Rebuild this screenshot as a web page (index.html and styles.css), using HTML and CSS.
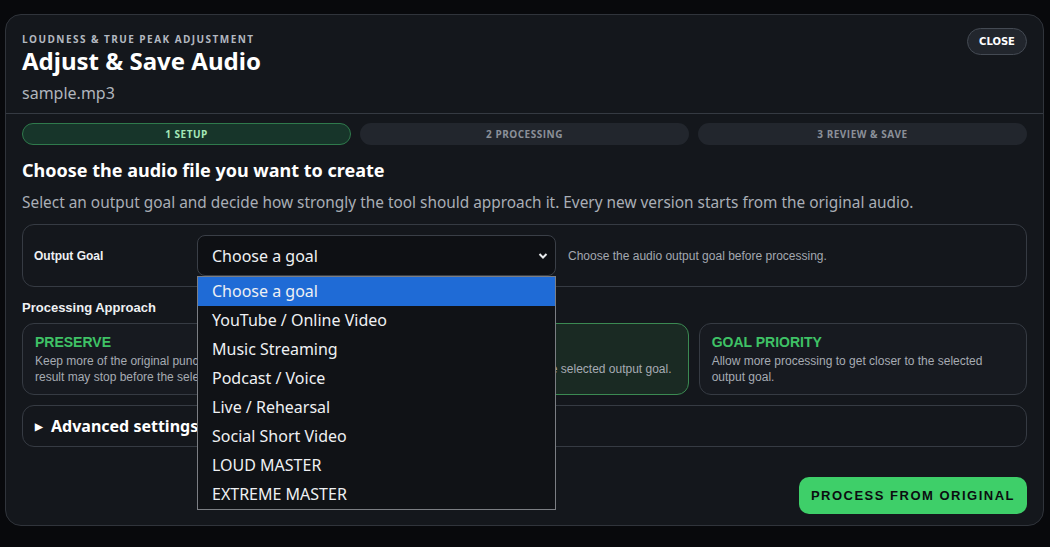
FILE: index.html
```html
<!DOCTYPE html>
<html lang="en">
<head>
    <meta charset="UTF-8">
    <meta name="viewport" content="width=device-width, initial-scale=1.0">
    <title>Adjust &amp; Save Audio</title>
    <link rel="stylesheet" href="styles.css">
</head>
<body>
    <div class="dialog">
        <div class="dialog-head">
            <div>
                <div class="eyebrow">LOUDNESS &amp; TRUE PEAK ADJUSTMENT</div>
                <h1>Adjust &amp; Save Audio</h1>
                <div class="file-name">sample.mp3</div>
            </div>
            <button class="btn-close">CLOSE</button>
        </div>

        <div class="dialog-body">
            <div class="steps">
                <div class="step active">1 SETUP</div>
                <div class="step">2 PROCESSING</div>
                <div class="step">3 REVIEW &amp; SAVE</div>
            </div>

            <h2>Choose the audio file you want to create</h2>
            <p class="lead">Select an output goal and decide how strongly the tool should approach it. Every new version starts from the original audio.</p>

            <div class="goal-row">
                <div class="goal-label">Output Goal</div>
                <div class="select-wrap">
                    <div class="select">
                        <span>Choose a goal</span>
                        <svg width="10" height="8" viewBox="0 0 10 8"><path d="M1.5 2 L5 5.5 L8.5 2" fill="none" stroke="#e8eaed" stroke-width="2"/></svg>
                    </div>
                    <ul class="options">
                        <li class="selected">Choose a goal</li>
                        <li>YouTube / Online Video</li>
                        <li>Music Streaming</li>
                        <li>Podcast / Voice</li>
                        <li>Live / Rehearsal</li>
                        <li>Social Short Video</li>
                        <li>LOUD MASTER</li>
                        <li>EXTREME MASTER</li>
                    </ul>
                </div>
                <div class="goal-hint">Choose the audio output goal before processing.</div>
            </div>

            <div class="section-label">Processing Approach</div>
            <div class="approaches">
                <div class="approach">
                    <div class="approach-title">PRESERVE</div>
                    <div class="approach-text">Keep more of the original punch and dynamics. The result may stop before the selected output goal.</div>
                </div>
                <div class="approach active">
                    <div class="approach-title">BALANCED</div>
                    <div class="approach-text">Balance punch and levels near the selected output goal.</div>
                </div>
                <div class="approach">
                    <div class="approach-title">GOAL PRIORITY</div>
                    <div class="approach-text">Allow more processing to get closer to the selected output goal.</div>
                </div>
            </div>

            <div class="advanced">
                <span class="arrow">&#9654;</span> Advanced settings
            </div>

            <div class="actions">
                <button class="btn-process">PROCESS FROM ORIGINAL</button>
            </div>
        </div>
    </div>
</body>
</html>
```

FILE: styles.css
```css
body {
    margin: 0;
    padding: 14px 6px 0 5px;
    background-color: #08090c;
    font-family: "Noto Sans", Arial, sans-serif;
    color: #eef0f3;
}

.dialog {
    background-color: #14171c;
    border: 1px solid #30343b;
    border-radius: 16px;
    height: 512px;
    box-sizing: border-box;
}

.dialog-head {
    display: flex;
    justify-content: space-between;
    align-items: flex-start;
    padding: 17px 16px 9px;
    border-bottom: 1px solid #353a42;
}

.eyebrow {
    font-family: "Open Sans", Arial, sans-serif;
    font-size: 10px;
    font-weight: bold;
    letter-spacing: 1.45px;
    line-height: 14px;
    color: #b3b8c0;
}

h1 {
    margin: 0;
    font-size: 24px;
    line-height: 30px;
    font-weight: bold;
    color: #fff;
}

.file-name {
    margin-top: 6px;
    font-size: 16px;
    line-height: 22px;
    color: #b0b5bd;
}

.btn-close {
    margin-top: -4px;
    width: 60px;
    height: 27px;
    border: 1px solid #444a53;
    border-radius: 14px;
    background-color: #22262d;
    color: #fff;
    font-family: "DejaVu Sans", Arial, sans-serif;
    font-size: 10px;
    font-weight: bold;
    cursor: pointer;
}

.dialog-body {
    padding: 9px 16px 0;
}

.steps {
    display: grid;
    grid-template-columns: 1fr 1fr 1fr;
    gap: 9px;
}

.step {
    height: 22px;
    line-height: 22px;
    border-radius: 11px;
    background-color: #22262d;
    color: #8b9099;
    font-family: "Open Sans", Arial, sans-serif;
    font-size: 10px;
    font-weight: bold;
    letter-spacing: 0.5px;
    text-align: center;
    box-sizing: border-box;
}

.step.active {
    background-color: #17352a;
    border: 1px solid #2f7a4c;
    line-height: 20px;
    color: #a4e8b8;
}

h2 {
    margin: 13px 0 0;
    font-size: 18px;
    line-height: 24px;
    font-weight: bold;
    color: #fff;
}

.lead {
    margin: 10px 0 0;
    font-size: 15.4px;
    line-height: 22px;
    color: #a9aeb6;
}

.goal-row {
    display: grid;
    grid-template-columns: 151px 359px 1fr;
    gap: 12px;
    align-items: center;
    margin-top: 10px;
    padding: 10px 11px;
    border: 1px solid #363b43;
    border-radius: 12px;
}

.goal-label {
    font-family: "Liberation Sans", Arial, sans-serif;
    font-size: 12px;
    font-weight: bold;
    color: #eef0f3;
}

.select-wrap {
    position: relative;
}

.select {
    display: flex;
    justify-content: space-between;
    align-items: center;
    height: 41px;
    padding: 0 7px 0 14px;
    border: 1px solid #3a3f47;
    border-radius: 8px;
    background-color: #0e1014;
    font-size: 16px;
    color: #eef0f3;
    box-sizing: border-box;
}

.options {
    position: absolute;
    top: 41px;
    left: 0;
    right: 0;
    margin: 0;
    padding: 0;
    list-style: none;
    border: 1px solid #7b7e83;
    background-color: #101216;
    z-index: 5;
}

.options li {
    height: 29px;
    line-height: 29px;
    padding-left: 14px;
    font-size: 16px;
    color: #eef0f3;
}

.options li.selected {
    background-color: #1f6bd6;
}

.goal-hint {
    font-family: "Liberation Sans", Arial, sans-serif;
    font-size: 12px;
    color: #a3a8b0;
}

.section-label {
    margin-top: 13px;
    font-family: "Liberation Sans", Arial, sans-serif;
    font-size: 13px;
    font-weight: bold;
    line-height: 16px;
    color: #eef0f3;
}

.approaches {
    display: grid;
    grid-template-columns: 1fr 1fr 1fr;
    gap: 10px;
    margin-top: 7px;
}

.approach {
    display: flex;
    flex-direction: column;
    justify-content: center;
    height: 72px;
    padding: 0 12px;
    border: 1px solid #363b43;
    border-radius: 12px;
    background-color: #171a20;
    box-sizing: border-box;
    font-family: "Liberation Sans", Arial, sans-serif;
}

.approach.active {
    background-color: #1a2a23;
    border-color: #3b8a52;
}

.approach-title {
    font-size: 14px;
    font-weight: bold;
    line-height: 18px;
    color: #3fc266;
}

.approach-text {
    margin-top: 2px;
    font-size: 12px;
    line-height: 16px;
    color: #a6abb3;
}

.advanced {
    display: flex;
    align-items: center;
    gap: 8px;
    height: 42px;
    margin-top: 10px;
    padding: 0 12px;
    border: 1px solid #363b43;
    border-radius: 12px;
    box-sizing: border-box;
    font-size: 16px;
    font-weight: bold;
    color: #fff;
}

.arrow {
    font-size: 10px;
}

.actions {
    display: flex;
    justify-content: flex-end;
    margin-top: 30px;
}

.btn-process {
    height: 37px;
    padding: 0 12px;
    border: none;
    border-radius: 10px;
    background-color: #3ecf69;
    color: #0b0d10;
    font-family: "Liberation Sans", Arial, sans-serif;
    font-size: 13px;
    font-weight: bold;
    letter-spacing: 1.5px;
    cursor: pointer;
}
```
